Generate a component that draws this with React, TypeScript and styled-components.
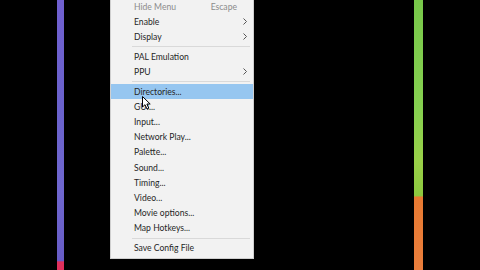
import React from 'react'
import styled, { createGlobalStyle } from 'styled-components'

const GlobalStyle = createGlobalStyle`
    html, body {
        margin: 0;
        padding: 0;
        background: #000000;
        overflow: hidden;
    }
`

type Item =
    | { kind: 'sep' }
    | { kind: 'item'; label: string; shortcut?: string; sub?: boolean; disabled?: boolean; active?: boolean }

const items: Item[] = [
    { kind: 'item', label: 'Hide Menu', shortcut: 'Escape', disabled: true },
    { kind: 'item', label: 'Enable', sub: true },
    { kind: 'item', label: 'Display', sub: true },
    { kind: 'sep' },
    { kind: 'item', label: 'PAL Emulation' },
    { kind: 'item', label: 'PPU', sub: true },
    { kind: 'sep' },
    { kind: 'item', label: 'Directories...', active: true },
    { kind: 'item', label: 'GUI...' },
    { kind: 'item', label: 'Input...' },
    { kind: 'item', label: 'Network Play...' },
    { kind: 'item', label: 'Palette...' },
    { kind: 'item', label: 'Sound...' },
    { kind: 'item', label: 'Timing...' },
    { kind: 'item', label: 'Video...' },
    { kind: 'item', label: 'Movie options...' },
    { kind: 'item', label: 'Map Hotkeys...' },
    { kind: 'sep' },
    { kind: 'item', label: 'Save Config File' },
]

export default function App() {
    return (
        <>
            <GlobalStyle />
            <Screen>
                <div />
                <Strip $tone="purple" />
                <div />
                <MenuColumn>
                    <Menu>
                        {items.map((it, i) =>
                            it.kind === 'sep' ? (
                                <Separator key={i} />
                            ) : (
                                <Row key={i} $active={it.active} $disabled={it.disabled}>
                                    <Label>{it.label}</Label>
                                    {it.shortcut && <Shortcut>{it.shortcut}</Shortcut>}
                                    <ArrowCell>
                                        {it.sub && (
                                            <svg width="4" height="7" viewBox="0 0 4 7">
                                                <path d="M0.5 0.5 L3.5 3.5 L0.5 6.5" fill="none" stroke="#555" strokeWidth="1" />
                                            </svg>
                                        )}
                                    </ArrowCell>
                                </Row>
                            )
                        )}
                    </Menu>
                    <Cursor width="10" height="14" viewBox="0 0 10 14">
                        <path d="M0.5 0.5 L0.5 11 L3 8.7 L5 13 L6.8 12.2 L4.9 8 L8.2 8 Z" fill="#ffffff" stroke="#000000" strokeWidth="1" strokeLinejoin="round" />
                    </Cursor>
                </MenuColumn>
                <div />
                <Strip $tone="green" />
                <div />
            </Screen>
        </>
    )
}

const Screen = styled.div`
    width: 480px;
    height: 270px;
    background: #000000;
    display: grid;
    grid-template-columns: 57px 7px 46px 144px 160px 9px 1fr;
    overflow: hidden;
`

const Strip = styled.div<{ $tone: 'purple' | 'green' }>`
    height: 270px;
    background: ${p =>
        p.$tone === 'purple'
            ? 'linear-gradient(180deg, #7060d0 0%, #6a62cc 40%, #6f67cf 70%, #675cc6 96.5%, #e0305c 97%, #e0305c 100%)'
            : 'linear-gradient(180deg, #78c84a 0%, #86d050 40%, #9ad048 60%, #8cc83e 72.5%, #e87a32 73%, #ea7e3c 100%)'};
`

const MenuColumn = styled.div`
    position: relative;
    height: 270px;
`

const Menu = styled.div`
    margin-top: -1px;
    background: #f2f2f2;
    border: 1px solid #cfcfcf;
    border-top: none;
    padding-bottom: 2px;
    font-family: Lato, 'Noto Sans', sans-serif;
    font-size: 8.6px;
    color: #262626;
`

const Row = styled.div<{ $active?: boolean; $disabled?: boolean }>`
    display: flex;
    align-items: center;
    height: 15.2px;
    padding-left: 23px;
    background: ${p => (p.$active ? '#96c6f0' : 'transparent')};
    color: ${p => (p.$disabled ? '#8c8c8c' : '#262626')};
    white-space: nowrap;
`

const Label = styled.span`
    flex: 1;
`

const Shortcut = styled.span`
    color: #8c8c8c;
`

const ArrowCell = styled.span`
    width: 16px;
    display: flex;
    align-items: center;
    justify-content: center;
`

const Separator = styled.div`
    height: 4.6px;
    display: flex;
    align-items: center;
    padding-left: 21px;
    padding-right: 3px;

    &::after {
        content: '';
        flex: 1;
        height: 1px;
        background: #d9d9d9;
    }
`

const Cursor = styled.svg`
    position: absolute;
    left: 32px;
    top: 96px;
`
